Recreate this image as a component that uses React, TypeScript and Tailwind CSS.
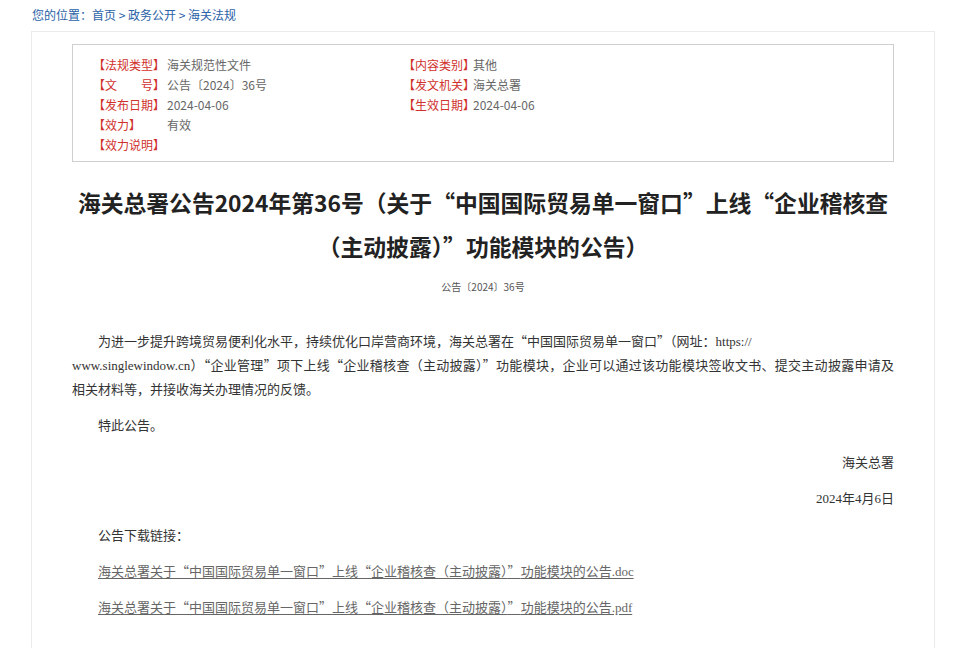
import React from 'react';

const sans = { fontFamily: '"Noto Sans CJK SC", "Noto Sans", sans-serif' };

const InfoRow = ({ label, value }: { label: string; value?: string }) => (
  <div className="flex leading-[20px]">
    <span className="w-[74px] shrink-0 text-[#d0312d]">{label}</span>
    <span className="text-[#666]">{value}</span>
  </div>
);

// 全角引号，正文西文字体的引号太窄
const Q = ({ children }: { children: React.ReactNode }) => (
  <span className="font-['Noto_Sans_CJK_SC',sans-serif] leading-none">{children}</span>
);

const App: React.FC = () => {
  return (
    <div
      className="min-h-screen bg-white"
      style={{ fontFamily: '"Liberation Serif", "Noto Sans CJK SC", serif' }}
    >
      {/* 面包屑 */}
      <div className="h-[31px] pl-[32px] pt-[6px] text-[12px] leading-[18px] text-[#2b62a7]" style={sans}>
        您的位置：首页 &gt; 政务公开 &gt; 海关法规
      </div>

      <div className="ml-[31px] w-[904px] min-h-[617px] border border-b-0 border-[#ebebeb] px-[40px] pt-[12px]">
        {/* 信息表 */}
        <div className="h-[118px] border border-[#cfcfcf] pl-[20px] pt-[10px] text-[12px]" style={sans}>
          <div className="flex">
            <div className="w-[310px]">
              <InfoRow label="【法规类型】" value="海关规范性文件" />
              <InfoRow label="【文　　号】" value="公告〔2024〕36号" />
              <InfoRow label="【发布日期】" value="2024-04-06" />
              <InfoRow label="【效力】" value="有效" />
              <InfoRow label="【效力说明】" />
            </div>
            <div className="w-[300px] [&_span:first-child]:w-[70px]">
              <InfoRow label="【内容类别】" value="其他" />
              <InfoRow label="【发文机关】" value="海关总署" />
              <InfoRow label="【生效日期】" value="2024-04-06" />
            </div>
          </div>
        </div>

        {/* 标题 */}
        <h1 className="mt-[19px] text-center text-[22.8px] font-bold leading-[44px] text-[#222]" style={sans}>
          <span className="block whitespace-nowrap">
            海关总署公告2024年第36号（关于“中国国际贸易单一窗口”上线“企业稽核查
          </span>
          <span className="block whitespace-nowrap">（主动披露）”功能模块的公告）</span>
        </h1>
        <div className="mt-[10px] text-center text-[10px] leading-[16px] text-[#555]" style={sans}>
          公告〔2024〕36号
        </div>

        {/* 正文 */}
        <div className="mt-[35px] text-[13px] text-[#333]">
          <div className="leading-[24px]">
            <div className="h-[24px] pl-[26px] whitespace-nowrap">
              为进一步提升跨境贸易便利化水平，持续优化口岸营商环境，海关总署在<Q>“</Q>中国国际贸易单一窗口<Q>”</Q>（网址：https://
            </div>
            <div className="h-[24px] whitespace-nowrap text-justify [text-align-last:justify]">
              www.singlewindow.cn）<Q>“</Q>企业管理<Q>”</Q>项下上线<Q>“</Q>企业稽核查（主动披露）<Q>”</Q>功能模块，企业可以通过该功能模块签收文书、提交主动披露申请及
            </div>
            <div className="h-[24px]">相关材料等，并接收海关办理情况的反馈。</div>
          </div>
          <div className="mt-[12px] h-[24px] pl-[26px] leading-[24px]">特此公告。</div>
          <div className="mt-[13px] h-[24px] text-right leading-[24px]">海关总署</div>
          <div className="mt-[12px] h-[24px] text-right leading-[24px]">2024年4月6日</div>
          <div className="mt-[13px] h-[24px] pl-[26px] leading-[24px]">公告下载链接：</div>
          <div className="mt-[12px] h-[24px] pl-[26px] leading-[24px]">
            <a href="#" className="text-[#666] underline underline-offset-2">
              海关总署关于<Q>“</Q>中国国际贸易单一窗口<Q>”</Q>上线<Q>“</Q>企业稽核查（主动披露）<Q>”</Q>功能模块的公告.doc
            </a>
          </div>
          <div className="mt-[12px] h-[24px] pl-[26px] leading-[24px]">
            <a href="#" className="text-[#666] underline underline-offset-2">
              海关总署关于<Q>“</Q>中国国际贸易单一窗口<Q>”</Q>上线<Q>“</Q>企业稽核查（主动披露）<Q>”</Q>功能模块的公告.pdf
            </a>
          </div>
        </div>
      </div>
    </div>
  );
};

export default App;
